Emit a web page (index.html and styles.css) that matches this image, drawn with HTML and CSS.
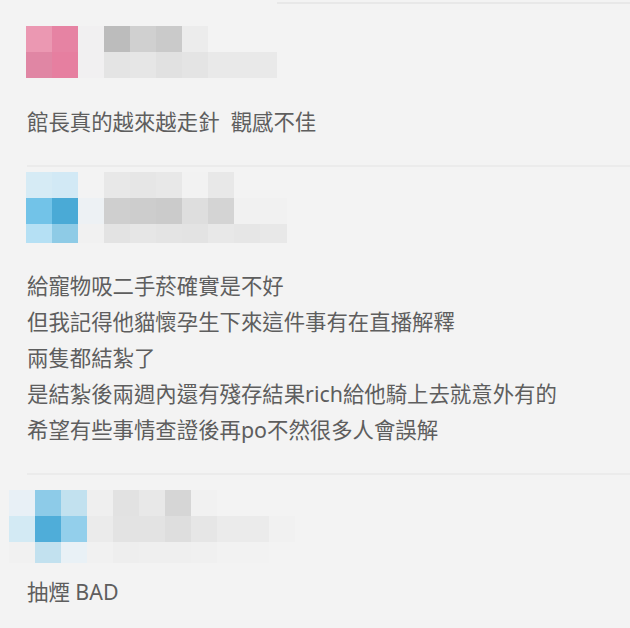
FILE: index.html
```html
<!DOCTYPE html>
<html lang="zh-Hant">
<head>
<meta charset="utf-8">
<title>留言</title>
<link rel="stylesheet" href="styles.css">
</head>
<body>
<div class="topline"></div>
<article class="comment comment-first">
  <div class="mosaic mosaic-a">
    <i style="background:#eb98b2"></i><i style="background:#e683a3"></i><i style="background:#f1f0f1"></i><i style="background:#bcbcbc"></i><i style="background:#d0d0d0"></i><i style="background:#cacaca"></i><i style="background:#ececec"></i><i style="background:#f3f3f3"></i><i style="background:#f3f3f3"></i><i style="background:#f3f3f3"></i>
    <i style="background:#e086a4"></i><i style="background:#e67fa0"></i><i style="background:#f1f0f1"></i><i style="background:#e4e4e4"></i><i style="background:#e6e6e6"></i><i style="background:#e1e1e1"></i><i style="background:#e4e4e4"></i><i style="background:#e9e9e9"></i><i style="background:#e9e9e9"></i><i style="background:#e9e9e9"></i>
  </div>
  <p class="text">館長真的越來越走針&nbsp; 觀感不佳</p>
</article>
<div class="sep"></div>
<article class="comment comment-second">
  <div class="mosaic mosaic-b">
    <i style="background:#d6ebf5"></i><i style="background:#d2e9f5"></i><i style="background:#f3f3f3"></i><i style="background:#e8e8e8"></i><i style="background:#e6e6e6"></i><i style="background:#e8e8e8"></i><i style="background:#f2f2f2"></i><i style="background:#e8e8e8"></i><i style="background:#f3f3f3"></i><i style="background:#f3f3f3"></i>
    <i style="background:#72c3e8"></i><i style="background:#4aaad6"></i><i style="background:#edf1f4"></i><i style="background:#cfcfcf"></i><i style="background:#cdcdcd"></i><i style="background:#cbcbcb"></i><i style="background:#dedede"></i><i style="background:#d4d4d4"></i><i style="background:#f1f1f1"></i><i style="background:#f1f1f1"></i>
    <i style="background:#b5e0f4"></i><i style="background:#8ecbe6"></i><i style="background:#f1f1f1"></i><i style="background:#e3e3e3"></i><i style="background:#e6e6e6"></i><i style="background:#e4e4e4"></i><i style="background:#e3e3e3"></i><i style="background:#e8e8e8"></i><i style="background:#e6e6e6"></i><i style="background:#e8e8e8"></i>
  </div>
  <p class="text">給寵物吸二手菸確實是不好<br>但我記得他貓懷孕生下來這件事有在直播解釋<br>兩隻都結紮了<br>是結紮後兩週內還有殘存結果rich給他騎上去就意外有的<br>希望有些事情查證後再po不然很多人會誤解</p>
</article>
<div class="sep"></div>
<article class="comment comment-third">
  <div class="mosaic mosaic-c">
    <i style="background:#e8f0f6"></i><i style="background:#8dcbe8"></i><i style="background:#c2e1ef"></i><i style="background:#efefef"></i><i style="background:#e2e2e2"></i><i style="background:#e8e8e8"></i><i style="background:#d6d6d6"></i><i style="background:#f1f1f1"></i><i style="background:#f3f3f3"></i><i style="background:#f3f3f3"></i><i style="background:#f3f3f3"></i>
    <i style="background:#d3eaf4"></i><i style="background:#4fadd9"></i><i style="background:#93cfeb"></i><i style="background:#ebebeb"></i><i style="background:#e3e3e3"></i><i style="background:#e3e3e3"></i><i style="background:#dedede"></i><i style="background:#e6e6e6"></i><i style="background:#ebebeb"></i><i style="background:#ebebeb"></i><i style="background:#f1f1f1"></i>
    <i style="background:#f1f1f1"></i><i style="background:#c2e1ef"></i><i style="background:#e9f1f6"></i><i style="background:#f1f1f1"></i><i style="background:#eeeeee"></i><i style="background:#efefef"></i><i style="background:#efefef"></i><i style="background:#f0f0f0"></i><i style="background:#f2f2f2"></i><i style="background:#f2f2f2"></i><i style="background:#f3f3f3"></i>
  </div>
  <p class="text">抽煙 BAD</p>
</article>
</body>
</html>
```
FILE: styles.css
```css
html, body {
  margin: 0;
  padding: 0;
  background: #f3f3f3;
}
body {
  font-family: "Noto Sans", "Noto Sans CJK TC", sans-serif;
  color: #5e5e5e;
  width: 630px;
  height: 628px;
  overflow: hidden;
}
.topline {
  height: 2px;
  margin: 2px 0 0 277px;
  background: #e8e8e8;
}
.sep {
  height: 2px;
  margin-left: 27px;
  background: #ebebeb;
}
.comment {
  padding-left: 27px;
}
.comment-first {
  padding-top: 22px;
  padding-bottom: 25px;
}
.comment-second {
  padding-top: 5px;
  padding-bottom: 25px;
}
.comment-third {
  padding-top: 15px;
}
.mosaic {
  display: grid;
}
.mosaic i {
  display: block;
}
.mosaic-a {
  margin-left: -1px;
  grid-template-columns: repeat(9, 26px) 17px;
  grid-template-rows: 26px 26px;
}
.mosaic-b {
  margin-left: -1px;
  grid-template-columns: repeat(9, 26px) 27px;
  grid-template-rows: 26px 26px 19px;
}
.mosaic-c {
  margin-left: -18px;
  grid-template-columns: repeat(11, 26px);
  grid-template-rows: 26px 26px 21px;
}
.text {
  margin: 0;
  font-size: 21.4px;
  line-height: 36px;
  font-family: "Noto Sans", "Noto Sans CJK TC", sans-serif;
}
.comment-second .text {
  margin-top: 25px;
}
.comment-first .text {
  margin-top: 26px;
}
.comment-third .text {
  margin-top: 11px;
}
```
